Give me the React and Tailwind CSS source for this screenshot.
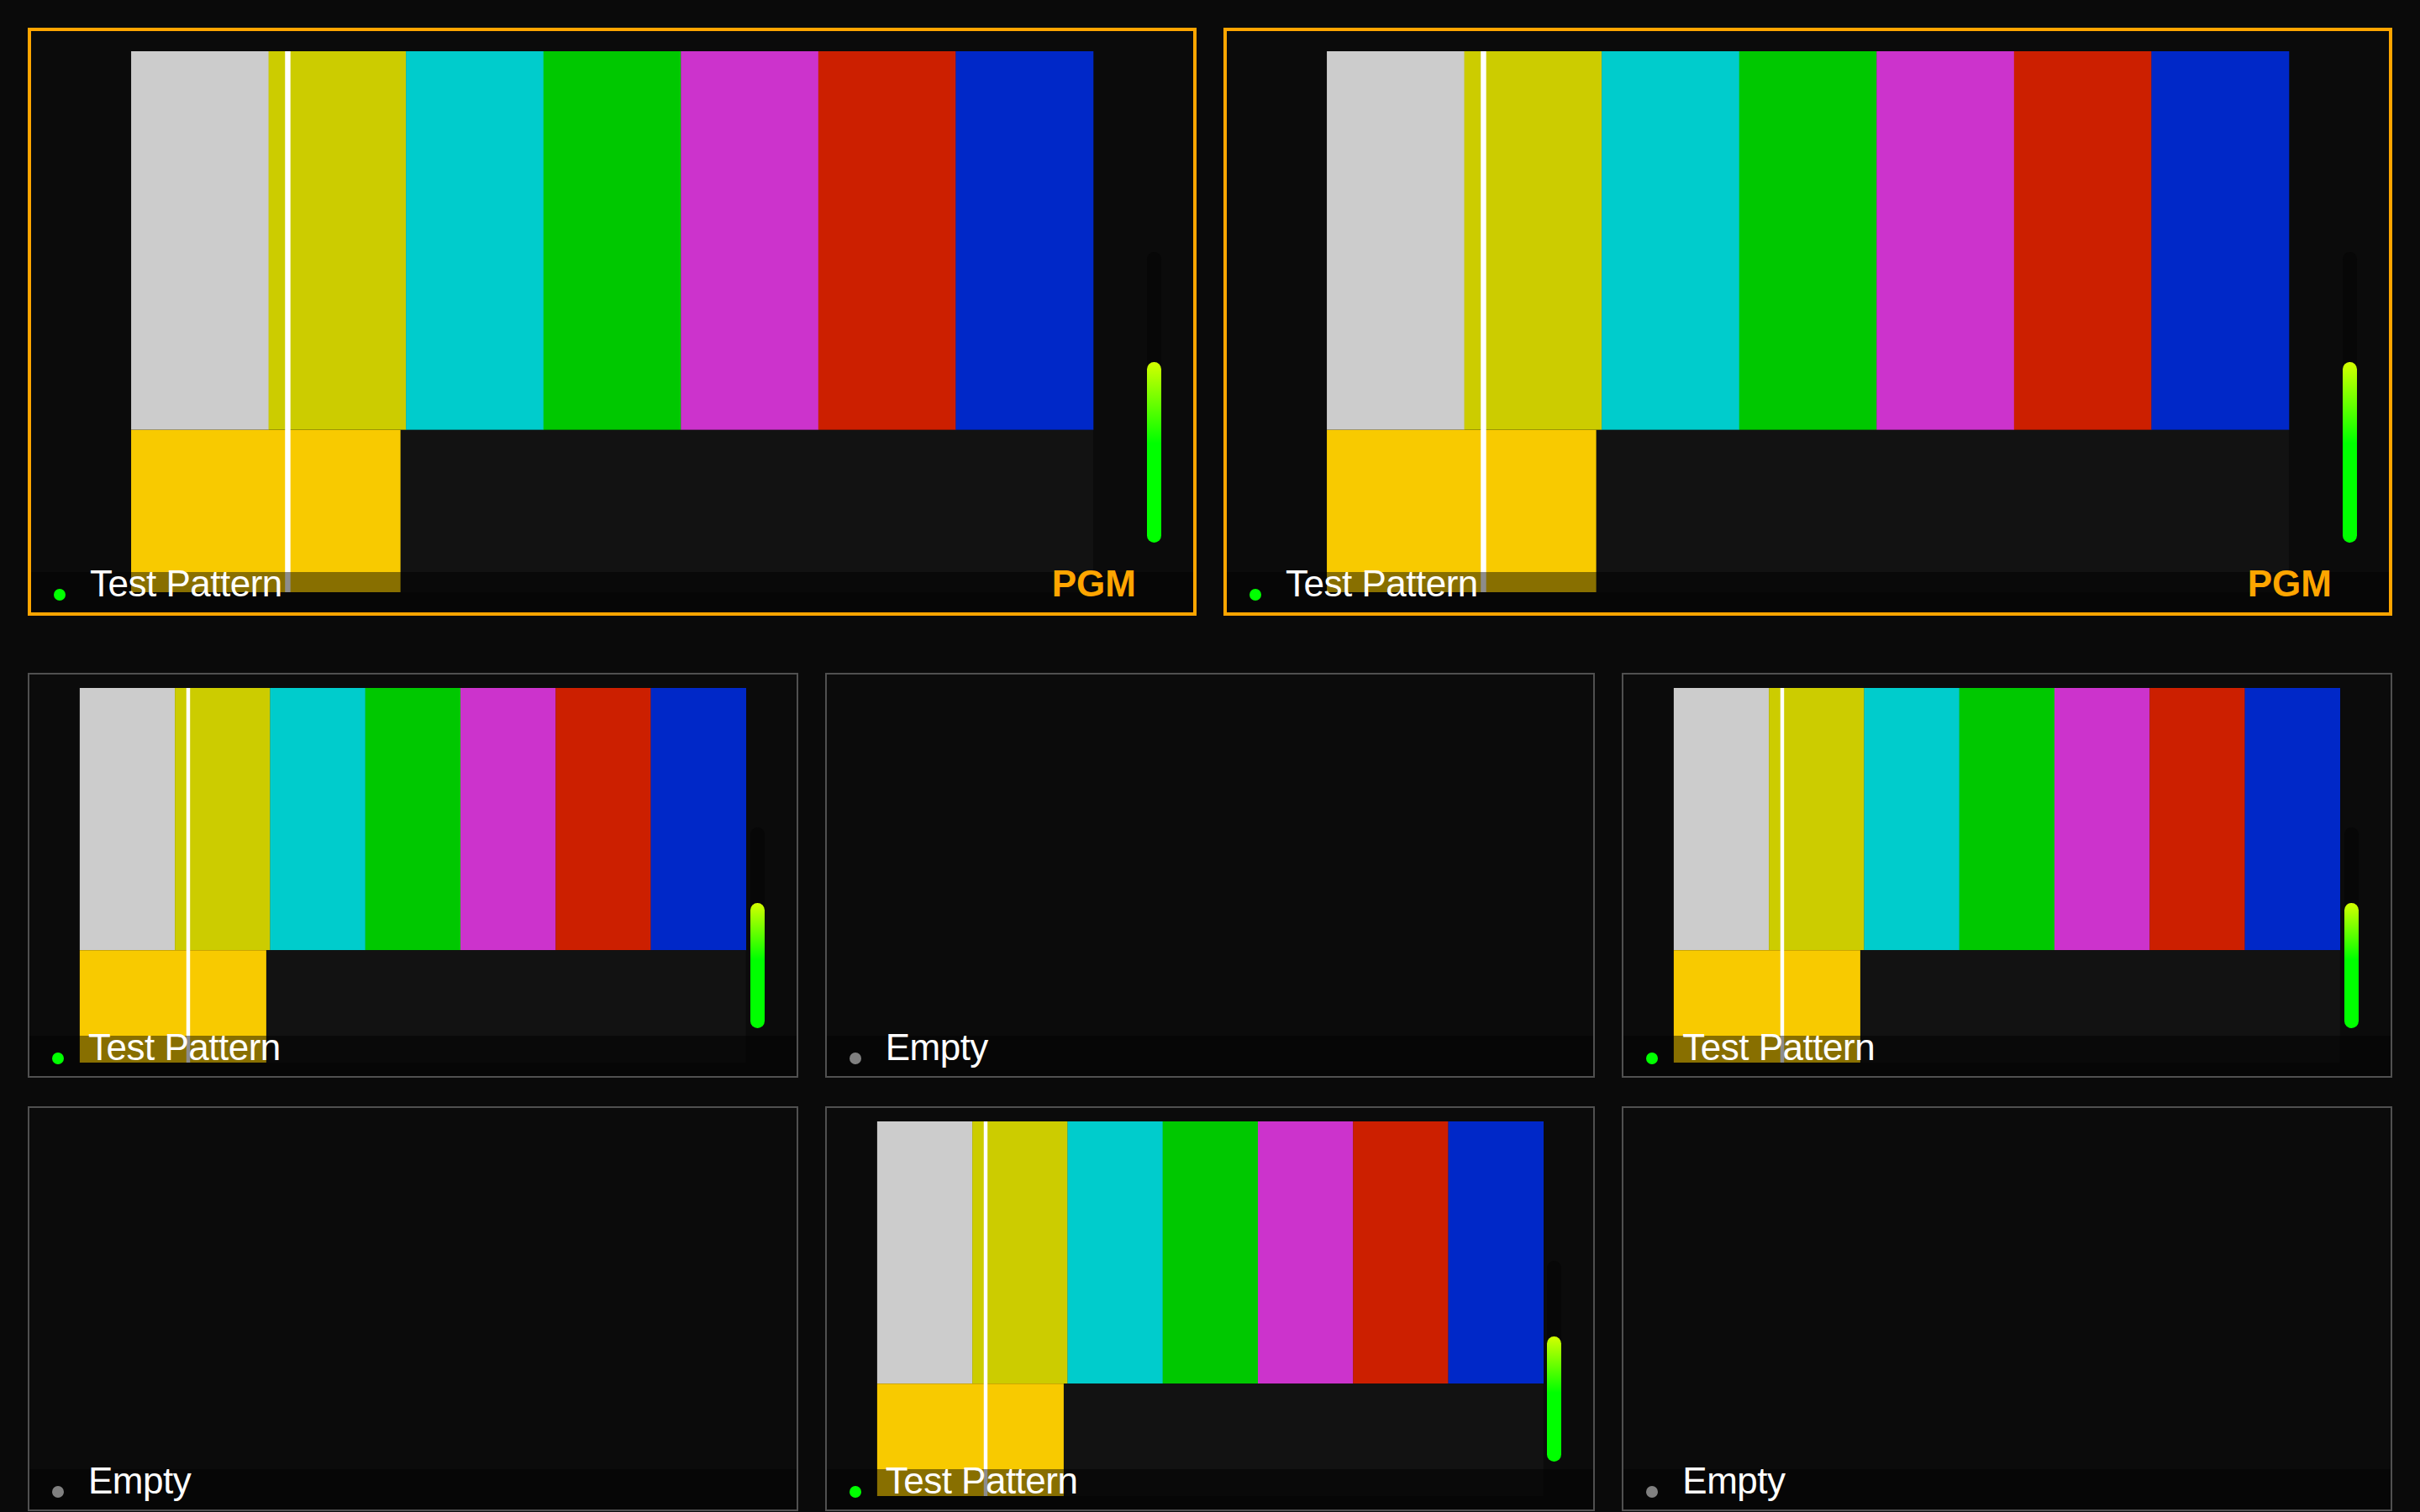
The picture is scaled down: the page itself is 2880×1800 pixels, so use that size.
/**
 * Multiview monitor — program tiles on top, source grid below.
 */

/* ── SMPTE-ish test card ───────────────────────────────────── */
const BARS = ['#cccccc', '#cccc00', '#00cccc', '#00c800', '#cc33cc', '#cc1f00', '#0028c8'];

function TestPattern() {
  const w = 1600 / 7;
  return (
    <svg viewBox="0 0 1600 900" preserveAspectRatio="xMidYMid meet" className="block h-full w-full">
      {BARS.map((c, i) => (
        <rect key={c} x={i * w} y="0" width={w + 0.5} height="630" fill={c} />
      ))}
      <rect x="0" y="630" width="1600" height="270" fill="#121212" />
      <rect x="0" y="630" width="448" height="270" fill="#f8ca00" />
      <rect x="256" y="0" width="9" height="900" fill="#ffffff" />
    </svg>
  );
}

/* ── Audio level meter ─────────────────────────────────────── */
function Meter({ level }) {
  return (
    <div className="absolute right-[38px] bottom-[12%] h-1/2 w-[17px] rounded-full bg-[#070707]">
      <div
        className="absolute inset-x-0 bottom-0 rounded-full bg-[linear-gradient(to_bottom,#d4ff00,#00ff00_45%,#00ff00)]"
        style={{ height: `${level}%` }}
      />
    </div>
  );
}

/* ── One multiview tile ────────────────────────────────────── */
function Tile({ source, pgm, large }) {
  const live = !!source;
  return (
    <div
      className={`relative overflow-hidden bg-[#0b0b0b] ${
        pgm ? 'border-4 border-[#ffa500]' : 'border-2 border-[#505050]'
      }`}
    >
      <div className={`h-full w-full ${large ? 'p-6' : 'p-4'}`}>
        {live && <TestPattern />}
      </div>

      {live && <Meter level={62} />}

      {/* label strip */}
      <div className="absolute inset-x-0 bottom-0 flex h-12 items-end bg-black/45 pb-[12px] pl-[27px] pr-[68px]">
        <span
          className={`mb-[2px] h-[14px] w-[14px] shrink-0 rounded-full ${
            live ? 'bg-[#00ff00]' : 'bg-[#808080]'
          }`}
        />
        <span className="ml-[29px] text-[44px] leading-none tracking-[-0.5px] text-white">
          {live ? 'Test Pattern' : 'Empty'}
        </span>
        {pgm && (
          <span className="ml-auto text-[44px] font-bold leading-none text-[#ffa500]">PGM</span>
        )}
      </div>
    </div>
  );
}

export default function App() {
  const grid = [true, false, true, false, true, false];

  return (
    <div className="h-screen overflow-hidden bg-[#0a0a0a] px-[33px] pt-[33px] font-['Liberation_Sans',Arial,sans-serif]">
      {/* Program row */}
      <div className="grid h-[700px] grid-cols-2 gap-8">
        <Tile source="test" pgm large />
        <Tile source="test" pgm large />
      </div>

      {/* Sources */}
      <div className="mt-[68px] grid auto-rows-[482px] grid-cols-3 gap-x-8 gap-y-[34px]">
        {grid.map((on, i) => (
          <Tile key={i} source={on ? 'test' : null} />
        ))}
      </div>
    </div>
  );
}
